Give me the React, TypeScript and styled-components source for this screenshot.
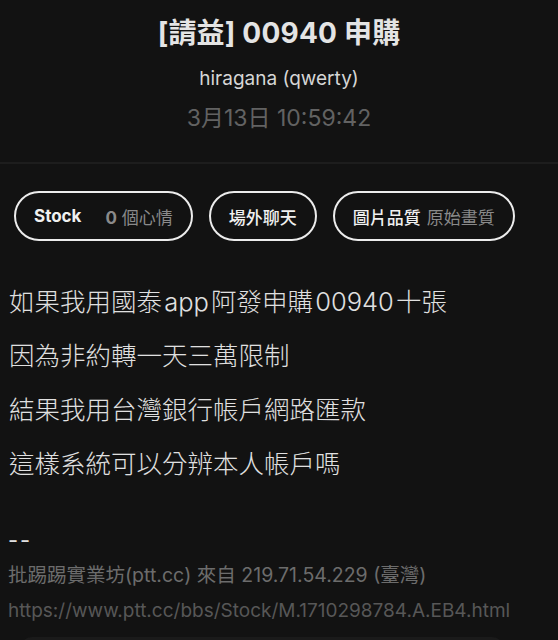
import styled, { createGlobalStyle } from 'styled-components';

const GlobalStyle = createGlobalStyle`
    html, body {
        margin: 0;
        padding: 0;
        background: #121212;
    }
    body {
        font-family: Inter, "Noto Sans CJK TC", sans-serif;
        color: #e2e2e2;
    }
`;

const bodyLines = [
    '如果我用國泰 app 阿發申購 00940 十張',
    '因為非約轉一天三萬限制',
    '結果我用台灣銀行帳戶網路匯款',
    '這樣系統可以分辨本人帳戶嗎',
];

export default function App() {
    return (
        <Page>
            <GlobalStyle />
            <Header>
                <Title>[請益] 00940 申購</Title>
                <Author>hiragana (qwerty)</Author>
                <Time>3月13日 10:59:42</Time>
            </Header>
            <Divider />
            <PillRow>
                <Pill>
                    <PillMain>Stock</PillMain>
                    <PillSub $gap={24}>
                        <b>0</b> 個心情
                    </PillSub>
                </Pill>
                <Pill>
                    <PillMain $medium>場外聊天</PillMain>
                </Pill>
                <Pill>
                    <PillMain $medium>圖片品質</PillMain>
                    <PillSub $gap={6}>原始畫質</PillSub>
                </Pill>
            </PillRow>
            <Content>
                {bodyLines.map((line) => (
                    <Line key={line}>{line}</Line>
                ))}
            </Content>
            <Footer>
                <Dashes>--</Dashes>
                <Meta>批踢踢實業坊(ptt.cc) 來自 219.71.54.229 (臺灣)</Meta>
                <Url>https://www.ptt.cc/bbs/Stock/M.1710298784.A.EB4.html</Url>
            </Footer>
            <NextCard />
        </Page>
    );
}

const Page = styled.div`
    width: 558px;
    height: 640px;
    overflow: hidden;
    background: #121212;
`;

const Header = styled.header`
    display: flex;
    flex-direction: column;
    align-items: center;
    padding-top: 14px;
    height: 148px;
    box-sizing: border-box;
`;

const Title = styled.h1`
    margin: 0;
    font-size: 28px;
    line-height: 38px;
    font-weight: 700;
    color: #e4e4e4;
    letter-spacing: 0.2px;
`;

const Author = styled.div`
    margin-top: 14px;
    font-size: 19px;
    line-height: 26px;
    color: #d6d6d6;
`;

const Time = styled.div`
    margin-top: 12px;
    font-size: 23px;
    line-height: 28px;
    color: #626262;
`;

const Divider = styled.div`
    height: 2px;
    margin-top: 14px;
    background: #1d1d1d;
`;

const PillRow = styled.div`
    display: flex;
    gap: 16px;
    padding: 27px 14px 0;
`;

const Pill = styled.div`
    height: 50px;
    box-sizing: border-box;
    border: 2.5px solid #ececec;
    border-radius: 25px;
    padding: 0 18px;
    display: flex;
    align-items: center;
    font-size: 17px;
`;

const PillMain = styled.span<{ $medium?: boolean }>`
    font-weight: ${(p) => (p.$medium ? 500 : 700)};
    color: #f0f0f0;
`;

const PillSub = styled.span<{ $gap: number }>`
    margin-left: ${(p) => p.$gap}px;
    color: #8a8a8a;

    b {
        font-weight: 700;
    }
`;

const Content = styled.div`
    padding: 34px 0 0 9px;
`;

const Line = styled.p`
    margin: 0;
    font-size: 25.5px;
    line-height: 54px;
    color: #e0e0e0;
    font-weight: 300;
    word-spacing: -5px;
`;

const Footer = styled.div`
    padding: 32px 0 0 8px;
    display: flex;
    flex-direction: column;
`;

const Dashes = styled.div`
    font-size: 22px;
    line-height: 35px;
    color: #e0e0e0;
    letter-spacing: 2px;
`;

const Meta = styled.div`
    font-size: 19.5px;
    line-height: 35px;
    color: #6c6c6c;
`;

const Url = styled.div`
    font-size: 19px;
    line-height: 35px;
    color: #575757;
    white-space: nowrap;
`;

const NextCard = styled.div`
    margin: 9px 54px 0 20px;
    height: 40px;
    border-radius: 12px;
    background: #1a1a1a;
`;
